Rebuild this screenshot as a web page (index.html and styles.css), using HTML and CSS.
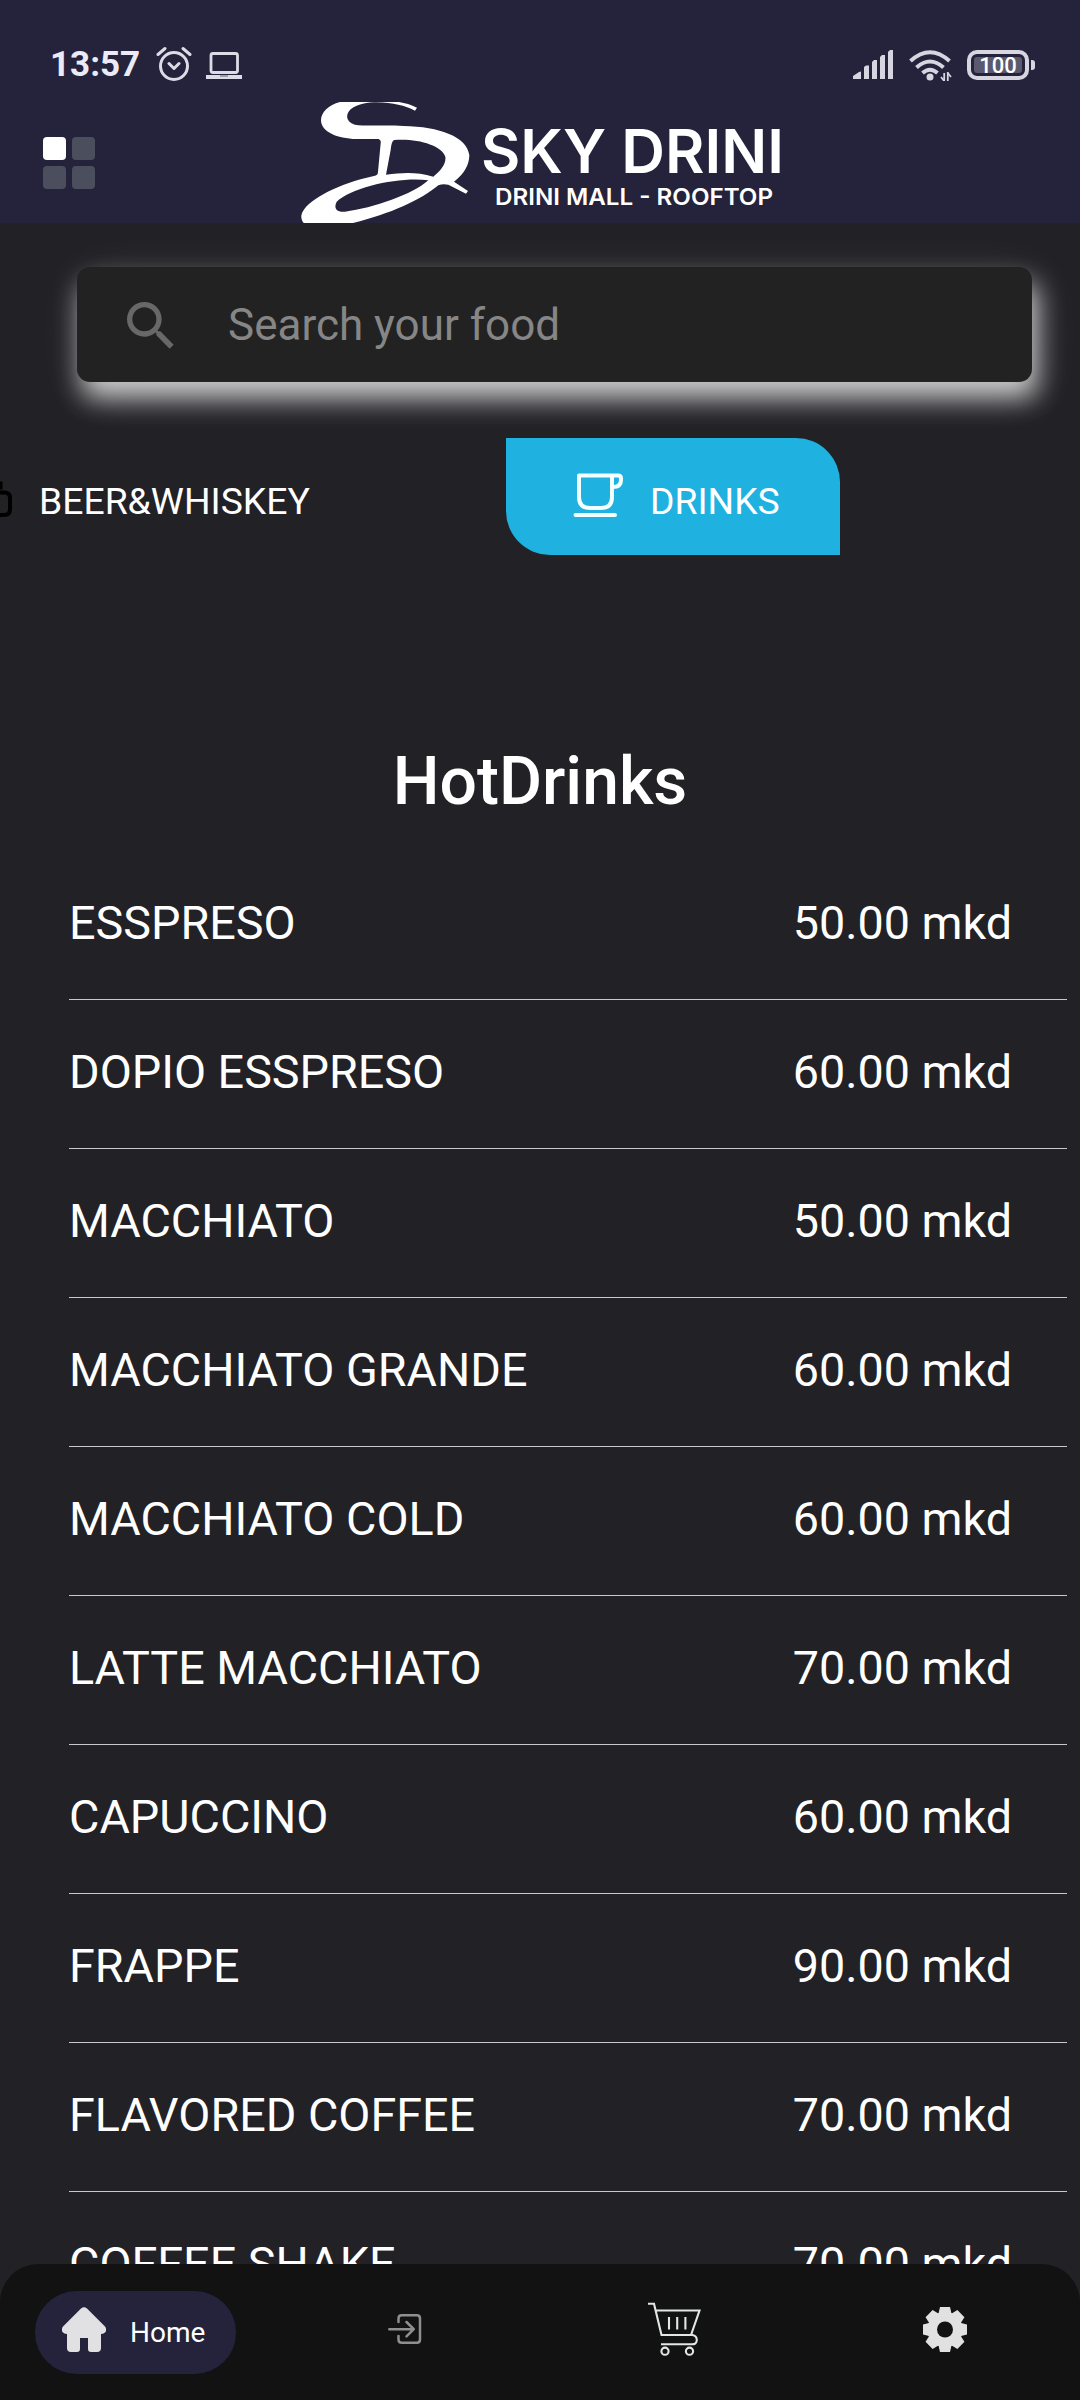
FILE: index.html
```html
<!DOCTYPE html>
<html lang="en">
<head>
<meta charset="utf-8">
<title>Sky Drini</title>
<link rel="stylesheet" href="styles.css">
</head>
<body>
<div class="app">
  <header class="header">
    <div class="status">
      <span class="clock">13:57</span>
      <svg class="alarm" width="36" height="36" viewBox="156 46 36 36" fill="none" stroke="#dcdbe6" stroke-width="3" stroke-linecap="round"><circle cx="174" cy="66" r="13.5"/><path d="M169 63.500l5 5 5-5M158 54.500l7-6M190 54.500l-7-6" stroke-linejoin="round"/></svg>
      <svg class="laptop" width="36" height="28" viewBox="206 50 36 28" fill="none" stroke="#dcdbe6"><rect x="211" y="52.500" width="26.500" height="19" rx="2" stroke-width="2.800"/><path d="M206 76h36" stroke-width="4"/><path d="M220 75h8" stroke="#8a899c" stroke-width="1.500"/></svg>
      <div class="status-right">
        <svg width="41" height="30" viewBox="853 49 41 30" fill="#d6d5e0"><path d="M853 78v-3l6-4 2-.5V78zM864 78V66l2-1.500h3V78zM872 78V61l2-2h3V78zM880 78V56l2-2h3V78zM888 78V51l2-2h3V78z"/></svg>
        <svg class="wifi" width="43" height="32" viewBox="909 48 43 32" fill="none" stroke="#d6d5e0" stroke-width="4"><path d="M910.500 60Q930 42.500 949.500 60M916.500 66.500Q930 54.500 943.500 66.500M922.500 72Q930 65.500 937.500 72"/><circle cx="930" cy="76" r="3.500" fill="#d6d5e0" stroke="none"/><path d="M944.200 72v9M947.800 71v9" stroke-width="1.800"/><path d="M941 76l3.200 4M951 76l-3.200-4" stroke-width="1.800"/></svg>
        <div class="battery"><span>100</span></div>
      </div>
    </div>
    <div class="brandbar">
      <div class="menu"><i class="on"></i><i></i><i></i><i></i></div>
      <svg class="logo" width="490" height="121" viewBox="296 102 490 121" fill="#fff">
        <path transform="translate(290 90) scale(.33333)" fill-rule="evenodd" d="M150 36C115 45 92 68 93 92C95 125 140 145 200 147L266 147Q274 150 272 160L264 245Q264 256 252 258C150 280 60 325 38 365C30 380 35 392 42 400L185 400C300 372 390 332 445 286Q458 280 475 284L528 311L534 303L492 275C525 250 538 222 538 195C530 140 450 110 340 108C280 104 230 110 195 104C168 95 165 75 182 58C200 42 235 37 260 37C310 38 345 47 375 62L381 53C360 42 335 37 315 34L150 34ZM312 150C380 144 455 165 466 200C470 225 445 247 430 260C380 245 340 247 288 254L302 180Q304 154 312 150ZM415 271C330 260 190 290 140 335C130 355 140 368 165 365C250 355 370 312 415 271Z"/>
        <text class="logo-name" x="481" y="172.500" textLength="303" lengthAdjust="spacingAndGlyphs">SKY DRINI</text>
        <text class="logo-sub" x="495" y="204.500" textLength="278" lengthAdjust="spacingAndGlyphs">DRINI MALL - ROOFTOP</text>
      </svg>
    </div>
  </header>

  <main class="content">
    <div class="search">
      <svg width="64" height="64" viewBox="0 0 24 24" fill="#686868"><path d="M15.500 14h-.79l-.28-.27A6.470 6.470 0 0 0 16 9.500 6.500 6.500 0 1 0 9.500 16c1.610 0 3.090-.59 4.230-1.570l.27.28v.79l5 4.990L20.490 19zm-6 0a4.500 4.500 0 1 1 0-9 4.500 4.500 0 0 1 0 9z"/></svg>
      <span>Search your food</span>
    </div>

    <nav class="tabs">
      <div class="tab">
        <svg class="beer" width="14" height="40" viewBox="0 480 14 40" fill="none" stroke="#000" stroke-width="4"><path d="M-4 492.500H4.500Q10 492.500 10 498V509Q10 515 4.500 515H-4"/><path d="M0 481.500v8" stroke-width="5"/></svg>
        <span>BEER&amp;WHISKEY</span>
      </div>
      <div class="tab active">
        <svg width="50" height="46" viewBox="573 472 50 46" fill="none" stroke="#f4ffff" stroke-width="4" stroke-linejoin="round" stroke-linecap="round"><path d="M579 475.500H618Q621 475.500 621 478.500V480Q621 487 613 487M579 475.500V497Q579 508 590 508H601Q612 508 612 497V475.500M575.500 515H615"/></svg>
        <span>DRINKS</span>
      </div>
    </nav>

    <h1 class="title">HotDrinks</h1>

    <ul class="list">
      <li><span>ESSPRESO</span><span>50.00 mkd</span></li>
      <li><span>DOPIO ESSPRESO</span><span>60.00 mkd</span></li>
      <li><span>MACCHIATO</span><span>50.00 mkd</span></li>
      <li><span>MACCHIATO GRANDE</span><span>60.00 mkd</span></li>
      <li><span>MACCHIATO COLD</span><span>60.00 mkd</span></li>
      <li><span>LATTE MACCHIATO</span><span>70.00 mkd</span></li>
      <li><span>CAPUCCINO</span><span>60.00 mkd</span></li>
      <li><span>FRAPPE</span><span>90.00 mkd</span></li>
      <li><span>FLAVORED COFFEE</span><span>70.00 mkd</span></li>
      <li><span>COFFEE SHAKE</span><span>70.00 mkd</span></li>
    </ul>
  </main>

  <footer class="bottom">
    <div class="home">
      <svg width="44" height="45" viewBox="0 0 44 45" fill="#e1e1e3"><path d="M19 1.500Q22 -1 25 1.500L43 19.500Q45 22 43.500 25Q42 27 39 27V41Q39 45 35 45H29Q26 45 26 42V31H18V42Q18 45 15 45H9Q5 45 5 41V27Q2 27 .5 25Q-1 22 1 19.500Z"/></svg>
      <span>Home</span>
    </div>
    <div class="slot">
      <svg width="34" height="32" viewBox="389 2313 34 32" fill="none" stroke="#8f8f8f" stroke-width="2.500" stroke-linecap="round" stroke-linejoin="round"><path d="M399.500 2322V2318.500Q399.500 2315.300 402.700 2315.300H417.800Q421 2315.300 421 2318.500V2339.500Q421 2342.800 417.800 2342.800H402.700Q399.500 2342.800 399.500 2339.500V2336"/><path d="M390.300 2329.200H414.500M407.500 2322L414.800 2329.200L407.500 2336.300"/></svg>
    </div>
    <div class="slot">
      <svg class="cart" width="54" height="54" viewBox="649 2301.500 54 54" fill="none" stroke="#e2e6e6" stroke-width="2.100"><path d="M649 2303.300H655L662.500 2334.500H692L700.500 2310H657M692.500 2334.300Q697.800 2335 697.800 2339.500T692.500 2343.800H662M670 2316.500V2329M678.200 2316.500V2329M686.400 2316.500V2329"/><circle cx="666" cy="2350.700" r="3.600"/><circle cx="690.500" cy="2350.700" r="3.600"/></svg>
    </div>
    <div class="slot">
      <svg width="44" height="45" viewBox="-22 -22.500 44 45"><g fill="#e1e1e1"><circle r="17.500"/><path id="tooth" d="M-6.500-16L-5-22.500H5L6.500-16V16L5 22.500H-5L-6.500 16Z"/><use href="#tooth" transform="rotate(45)"/><use href="#tooth" transform="rotate(90)"/><use href="#tooth" transform="rotate(135)"/></g><circle r="8" fill="#121212"/></svg>
    </div>
  </footer>
</div>
</body>
</html>
```
FILE: styles.css
```css
* { box-sizing: border-box; }
body { margin: 0; background: #222126; font-family: Roboto, sans-serif; color: #fff; }
svg { display: block; flex: none; }
.app { width: 1080px; height: 2400px; display: flex; flex-direction: column; overflow: hidden; }

.header { height: 223px; flex: none; background: #24233b; }
.status { height: 102px; padding: 28px 44px 0 50px; display: flex; align-items: center; }
.clock { width: 106px; font-size: 35px; font-weight: 700; color: #ebeaf5; line-height: 40px; white-space: nowrap; }
.alarm { margin-top: -2px; }
.laptop { margin-left: 14px; }
.status-right { margin-left: auto; display: flex; align-items: center; }
.wifi { margin-left: 15px; }
.battery { position: relative; margin: 0 7px 0 15px; width: 62px; height: 30px; padding: 3px; border: 4px solid #d6d5e0; border-radius: 10px; }
.battery::after { content: ""; position: absolute; right: -10px; top: 6px; width: 4px; height: 10px; border-radius: 0 3px 3px 0; background: #d6d5e0; }
.battery span { display: block; height: 16px; border-radius: 3px; background: #5b596e; font-size: 22px; line-height: 17px; font-weight: 500; text-align: center; }

.brandbar { height: 121px; display: flex; align-items: flex-start; }
.menu { margin: 35px 0 0 43px; width: 52px; display: grid; grid-template-columns: 23px 23px; gap: 6px; }
.menu i { height: 23px; border-radius: 4px; background: #4b4e5c; }
.menu .on { background: #fff; }
.logo { margin-left: 201px; }
.logo-name { font: 600 61px Inter, sans-serif; }
.logo-sub { font: 600 23px Inter, sans-serif; }

.content { flex: 1; min-height: 0; overflow: hidden; }
.search { margin: 44px 48px 0 77px; height: 115px; padding-left: 42px; display: flex; align-items: center; gap: 45px; border-radius: 13px; background: #222; box-shadow: 5px 16px 27px rgba(255,255,255,.75), 5px 10px 50px rgba(255,255,255,.12); font-size: 44px; color: #868686; }
.search svg { margin-top: 3px; }

.tabs { margin-top: 56px; height: 117px; display: flex; font-size: 37.3px; }
.tab { width: 506px; display: flex; align-items: center; gap: 25px; padding-top: 8px; }
.beer { margin-top: -2px; }
.active { width: 334px; padding-left: 67px; gap: 27px; background: #1fb1df; border-radius: 0 44px 0 44px; }
.active svg { margin-top: -11px; }

.title { margin: 177px 0 0; font-size: 66px; line-height: 100px; font-weight: 500; text-align: center; }
.list { list-style: none; margin: 19px 13px 0 69px; padding: 0; }
.list li { height: 149px; padding: 0 55px 5px 0; display: flex; align-items: center; justify-content: space-between; border-bottom: 1px solid #c9c8cc; font-size: 46.700px; }

.bottom { flex: none; height: 136px; padding: 27px 0 0 35px; display: flex; background: #121212; border-radius: 38px 38px 0 0; }
.home { flex: none; width: 201px; height: 83px; margin-right: 34px; padding-left: 27px; display: flex; align-items: center; gap: 24px; border-radius: 42px; background: #24233b; font-size: 28px; }
.home svg { margin-top: -7px; }
.slot { flex: 1; height: 76px; display: flex; align-items: center; justify-content: center; }
```
